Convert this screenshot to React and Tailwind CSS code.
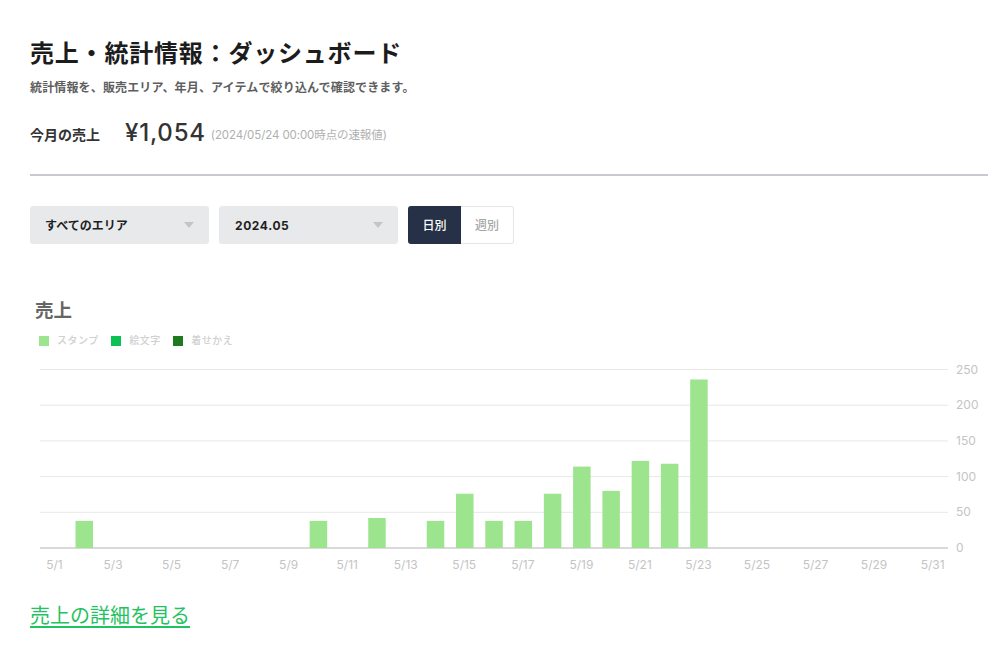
import React from "react";

const FONT = "font-['Inter','Noto_Sans_CJK_JP',sans-serif]";

const sales = [
  [2, 38], [10, 38], [12, 42], [14, 38], [15, 76], [16, 38], [17, 38],
  [18, 76], [19, 114], [20, 80], [21, 122], [22, 118], [23, 236],
];
const yTicks = [0, 50, 100, 150, 200, 250];
const xTicks = [1, 3, 5, 7, 9, 11, 13, 15, 17, 19, 21, 23, 25, 27, 29, 31];

// chart coordinates, origin is the svg's top-left corner
const BASE = 188;
const PER_UNIT = 0.714;
const dayX = (d) => 25 + (d - 1) * 29.27;

const SalesChart = () => (
  <svg width="959" height="216" className="block" fontFamily="Inter, 'Noto Sans CJK JP', sans-serif">
    {yTicks.map((t) => (
      <g key={t}>
        <line
          x1="10"
          x2="918"
          y1={BASE - t * PER_UNIT}
          y2={BASE - t * PER_UNIT}
          stroke={t === 0 ? "#cccccc" : "#e8e8e8"}
          strokeWidth={t === 0 ? 1.5 : 1}
        />
        <text x="926" y={BASE - t * PER_UNIT + 4} fontSize="12" fill="#c4c4c4">
          {t}
        </text>
      </g>
    ))}
    {sales.map(([d, v]) => (
      <rect
        key={d}
        x={dayX(d) - 8.75}
        y={BASE - v * PER_UNIT}
        width="17.5"
        height={v * PER_UNIT}
        fill="#9de48f"
      />
    ))}
    {xTicks.map((d) => (
      <text key={d} x={dayX(d) - 0.5} y="209" fontSize="12" fill="#c4c4c4" textAnchor="middle">
        5/{d}
      </text>
    ))}
  </svg>
);

const Select = ({ label, className }) => (
  <div className={`flex h-[38px] w-[179px] items-center justify-between rounded-[3px] bg-[#e8e9eb] pr-[15px] ${className}`}>
    <span className="pt-px text-[12px] font-bold text-[#1e1e1e]">{label}</span>
    <span className="h-0 w-0 border-x-[5.5px] border-t-[6px] border-x-transparent border-t-[#c3c5c9]" />
  </div>
);

const LegendItem = ({ color, label }) => (
  <div className="flex items-center gap-[8px]">
    <span className={`h-[10px] w-[10px] ${color}`} />
    <span className="text-[10px] font-medium tracking-[0.5px] text-[#d0d0d0]">{label}</span>
  </div>
);

export default function App() {
  return (
    <div className={`h-[670px] w-[989px] overflow-hidden bg-white pl-[30px] pr-px pt-[37px] ${FONT}`}>
      {/* Header */}
      <h1 className="text-[24px] leading-[34px] font-bold tracking-[0.8px] text-[#1c1c1c]">
        売上・統計情報：ダッシュボード
      </h1>
      <p className="mt-[8px] text-[12px] leading-[18px] font-semibold tracking-[0.15px] text-[#5e5e5e]">
        統計情報を、販売エリア、年月、アイテムで絞り込んで確認できます。
      </p>
      <div className="mt-[19px] flex h-[32px] items-center">
        <span className="mt-[4px] w-[95px] text-[14px] font-semibold text-[#333333]">今月の売上</span>
        <span className="mt-[2px] text-[24px] font-medium tracking-[0.8px] text-[#333333]">¥1,054</span>
        <span className="mt-[8px] ml-[5px] text-[11.5px] tracking-[-0.1px] text-[#b0b0b0]">
          (2024/05/24 00:00時点の速報値)
        </span>
      </div>
      <div className="mt-[26px] h-[2px] bg-[#c9c9d6]" />

      {/* Filters */}
      <div className="mt-[30px] flex gap-[10px]">
        <Select label="すべてのエリア" className="pl-[15px]" />
        <Select label="2024.05" className="pl-[16px] tracking-[0.6px]" />
        <div className="flex h-[38px] text-[12px] font-medium">
          <div className="flex w-[53px] items-center justify-center rounded-l-[3px] bg-[#263147] pt-px text-white">日別</div>
          <div className="flex w-[53px] items-center justify-center rounded-r-[3px] border border-l-0 border-[#e6e6e6] pt-px text-[#a6a6a6]">
            週別
          </div>
        </div>
      </div>

      {/* Chart */}
      <h2 className="mt-[53px] pl-[5px] text-[18.5px] leading-[26px] font-bold text-[#666666]">売上</h2>
      <div className="mt-[10px] flex gap-[12.5px] pl-[9px]">
        <LegendItem color="bg-[#9de48f]" label="スタンプ" />
        <LegendItem color="bg-[#0cc153]" label="絵文字" />
        <LegendItem color="bg-[#1f7a1f]" label="着せかえ" />
      </div>
      <div className="mt-[12px]">
        <SalesChart />
      </div>

      <a href="#" className="mt-[26px] block w-fit text-[20px] leading-[28px] text-[#1fc35f] underline underline-offset-[3px]">
        売上の詳細を見る
      </a>
    </div>
  );
}
